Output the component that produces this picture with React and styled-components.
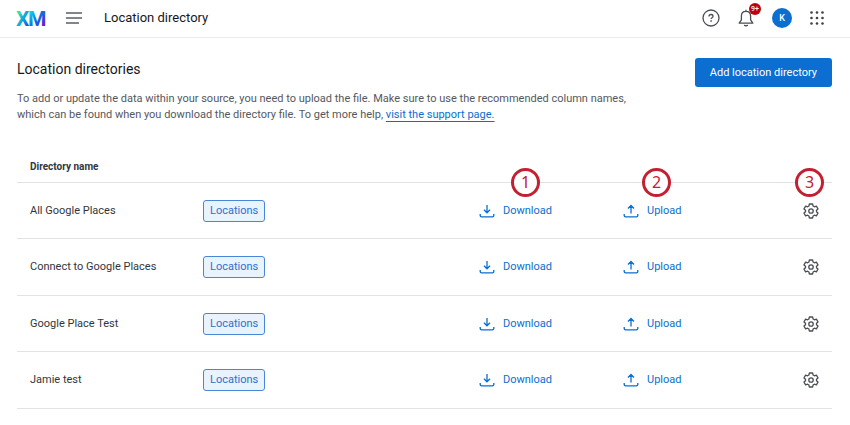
import React from 'react';
import styled, { createGlobalStyle } from 'styled-components';

const directories = [
    { id: 1, name: 'All Google Places', type: 'Locations' },
    { id: 2, name: 'Connect to Google Places', type: 'Locations' },
    { id: 3, name: 'Google Place Test', type: 'Locations' },
    { id: 4, name: 'Jamie test', type: 'Locations' },
];

const Logo = () => (
    <svg width="32" height="28" viewBox="0 0 32 28" role="img" aria-label="XM">
        <defs>
            <linearGradient id="xmX" x1="0" y1="0" x2="1" y2="1">
                <stop offset="0.2" stopColor="#3fe0a8" />
                <stop offset="0.5" stopColor="#12a5e0" />
                <stop offset="0.8" stopColor="#0a62dd" />
            </linearGradient>
            <linearGradient id="xmM" x1="0" y1="0" x2="1" y2="1">
                <stop offset="0.2" stopColor="#10c8f0" />
                <stop offset="0.5" stopColor="#0a6fe0" />
                <stop offset="0.85" stopColor="#6a10e0" />
            </linearGradient>
        </defs>
        <g fontFamily="Roboto, sans-serif" fontWeight="700" fontSize="21">
            <text x="0" y="22" fill="url(#xmX)">X</text>
            <text x="12" y="22" fill="url(#xmM)">M</text>
        </g>
    </svg>
);

const MenuIcon = () => (
    <svg width="18" height="14" viewBox="0 0 18 14" fill="none" stroke="#5a5f66" strokeWidth="1.6">
        <path d="M0 2h16M0 7h16M0 12h13" />
    </svg>
);

const HelpIcon = () => (
    <svg width="18" height="18" viewBox="0 0 18 18" fill="none" stroke="#4a4e54" strokeWidth="1.3">
        <circle cx="9" cy="9" r="8" />
        <path d="M7 7.4c0-1.1.8-1.900 2-1.900s2 .7 2 1.800c0 1.400-1.900 1.400-1.900 2.700" />
        <path d="M9.100 11.200v1.500" strokeWidth="1.5" />
    </svg>
);

const BellIcon = () => (
    <svg width="16" height="18" viewBox="0 0 16 18" fill="none" stroke="#4a4e54" strokeWidth="1.3" strokeLinejoin="round">
        <path d="M8 .8v1.600M8 2.400c-2.800 0-4.600 2-4.600 4.700v3.700L1.200 14.200h13.600l-2.200-3.400V7.100C12.600 4.400 10.800 2.400 8 2.400z" />
        <path d="M6.200 16c.9 1 2.700 1 3.600 0" />
    </svg>
);

const AppsIcon = () => (
    <svg width="14" height="14" viewBox="0 0 14 14" fill="#3c4046">
        {[1.5, 7, 12.5].map((y) => [1.5, 7, 12.5].map((x) => (
            <circle key={`${x}-${y}`} cx={x} cy={y} r="1.3" />
        )))}
    </svg>
);

const DownloadIcon = () => (
    <svg width="16" height="14" viewBox="0 0 16 14" fill="none" stroke="currentColor" strokeWidth="1.3">
        <path d="M8 1v7.500M5 5.800l3 3 3-3M1.200 10v1.400c0 .9.500 1.400 1.400 1.400h10.800c.9 0 1.400-.5 1.400-1.400V10" />
    </svg>
);

const UploadIcon = () => (
    <svg width="16" height="14" viewBox="0 0 16 14" fill="none" stroke="currentColor" strokeWidth="1.3">
        <path d="M8 9.500v-8M5 4.500l3-3 3 3M1.200 10v1.400c0 .9.500 1.400 1.400 1.400h10.800c.9 0 1.400-.5 1.400-1.400V10" />
    </svg>
);

const GearIcon = () => (
    <svg width="16" height="16" viewBox="0 0 16 16" fill="none" stroke="#4a4e54" strokeWidth="1.3" strokeLinejoin="round">
        <path d="M6.400 1h3.200l.5 2 1.300.8 2-.6 1.600 2.700L13.500 7.300v1.400L15 10.100l-1.600 2.700-2-.6-1.300.8-.5 2H6.400l-.5-2-1.300-.8-2 .6L1 10.100l1.500-1.400V7.300L1 5.900l1.600-2.700 2 .6L5.900 3z" />
        <circle cx="8" cy="8" r="2.200" />
    </svg>
);

const App = () => {
    return (
        <>
            <GlobalStyle />
            <Header>
                <Logo />
                <IconButton aria-label="Menu"><MenuIcon /></IconButton>
                <PageName>Location directory</PageName>
                <HeaderActions>
                    <IconButton aria-label="Help"><HelpIcon /></IconButton>
                    <IconButton aria-label="Notifications">
                        <BellIcon />
                        <Badge>9+</Badge>
                    </IconButton>
                    <Avatar>K</Avatar>
                    <IconButton aria-label="Apps"><AppsIcon /></IconButton>
                </HeaderActions>
            </Header>
            <Main>
                <Intro>
                    <div>
                        <Title>Location directories</Title>
                        <Description>
                            To add or update the data within your source, you need to upload the file. Make sure to use the recommended column names, which can be found when you download the directory file. To get more help, <a href="#support">visit the support page.</a>
                        </Description>
                    </div>
                    <AddButton>Add location directory</AddButton>
                </Intro>
                <Table>
                    <colgroup>
                        <Col $width={186} />
                        <Col />
                        <Col $width={144} />
                        <Col $width={180} />
                        <Col $width={29} />
                    </colgroup>
                    <thead>
                        <tr>
                            <th scope="col"><ColumnName>Directory name</ColumnName></th>
                            <td colSpan="4" />
                        </tr>
                    </thead>
                    <tbody>
                        {directories.map((directory, index) => (
                            <tr key={directory.id}>
                                <NameCell>{directory.name}</NameCell>
                                <td><Tag>{directory.type}</Tag></td>
                                <td>
                                    <ActionButton>
                                        <DownloadIcon />Download
                                        {index === 0 && <Marker $left={32}>1</Marker>}
                                    </ActionButton>
                                </td>
                                <td>
                                    <ActionButton>
                                        <UploadIcon />Upload
                                        {index === 0 && <Marker $left={19}>2</Marker>}
                                    </ActionButton>
                                </td>
                                <td>
                                    <ActionButton aria-label="Settings">
                                        <GearIcon />
                                        {index === 0 && <Marker $left={-8}>3</Marker>}
                                    </ActionButton>
                                </td>
                            </tr>
                        ))}
                    </tbody>
                </Table>
            </Main>
        </>
    )
}

const GlobalStyle = createGlobalStyle`
    * {
        box-sizing: border-box;
    }
    body {
        margin: 0;
        background: white;
        color: #32363a;
        font-family: Roboto, sans-serif;
        font-size: 11px;
        line-height: 16px;
    }
    button {
        padding: 0;
        border: none;
        background: transparent;
        font: inherit;
        cursor: pointer;
    }
    svg {
        display: block;
        flex-shrink: 0;
    }
`;

const Header = styled.header`
    display: flex;
    align-items: center;
    height: 38px;
    gap: 18px;
    padding: 0 26px 2px 16px;
    border-bottom: 1px solid #ececee;
`;

const IconButton = styled.button`
    position: relative;
    display: flex;
    align-items: center;
`;

const PageName = styled.span`
    margin-left: 2px;
    color: #16181b;
    font-size: 13px;
`;

const HeaderActions = styled.div`
    display: flex;
    align-items: center;
    gap: 18px;
    margin-left: auto;
`;

const Badge = styled.span`
    position: absolute;
    top: -6px;
    left: 11px;
    width: 12px;
    height: 12px;
    border-radius: 50%;
    background: #c00010;
    color: white;
    font-size: 7px;
    font-weight: 500;
    line-height: 12px;
    text-align: center;
`;

const Avatar = styled.button`
    width: 20px;
    height: 20px;
    border-radius: 50%;
    background: #0b6ed0;
    color: white;
    font-size: 9px;
    font-weight: 500;
`;

const Main = styled.main`
    padding: 20px 18px 16px 17px;
`;

const Intro = styled.div`
    display: flex;
    justify-content: space-between;
    align-items: flex-start;
    gap: 40px;
`;

const Title = styled.h1`
    margin: 0 0 11px;
    color: #16181b;
    font-size: 14px;
    font-weight: 400;
    line-height: 22px;
`;

const Description = styled.p`
    margin: 0;
    color: #54585e;
    a {
        color: #0b6ed0;
        text-underline-offset: 3px;
    }
`;

const AddButton = styled.button`
    flex-shrink: 0;
    height: 29px;
    padding: 0 15px;
    border-radius: 3px;
    background: #0b6ed0;
    color: white;
`;

const Table = styled.table`
    width: 100%;
    margin-top: 26px;
    border-collapse: collapse;
    table-layout: fixed;
    th, td {
        padding: 0;
        border-bottom: 1px solid #e2e3e5;
        text-align: left;
    }
    thead tr {
        height: 33px;
    }
    tbody td {
        padding-top: 1px;
    }
    tbody tr {
        height: 56px;
    }
    tbody tr:nth-child(even) {
        height: 57px;
    }
`;

const Col = styled.col`
    width: ${(props) => (props.$width ? `${props.$width}px` : 'auto')};
`;

const ColumnName = styled.div`
    padding: 10px 0 6px 13px;
    font-size: 10px;
    font-weight: 700;
`;

const NameCell = styled.td`
    && {
        padding-left: 13px;
    }
`;

const Tag = styled.span`
    display: inline-block;
    padding: 2px 6px;
    border: 1px solid #4a86d8;
    border-radius: 3px;
    background: #e9f3fe;
    color: #2f6fcb;
`;

const ActionButton = styled.button`
    position: relative;
    display: flex;
    align-items: center;
    gap: 8px;
    color: #0b6ed0;
`;

const Marker = styled.span`
    position: absolute;
    top: 50%;
    left: ${(props) => props.$left}px;
    width: 29px;
    height: 29px;
    margin-top: -43px;
    border: 3px solid #c32032;
    border-radius: 50%;
    background: white;
    color: #c32032;
    font-family: "Noto Sans", sans-serif;
    font-size: 16px;
    line-height: 23px;
    text-align: center;
`;

export default App;
